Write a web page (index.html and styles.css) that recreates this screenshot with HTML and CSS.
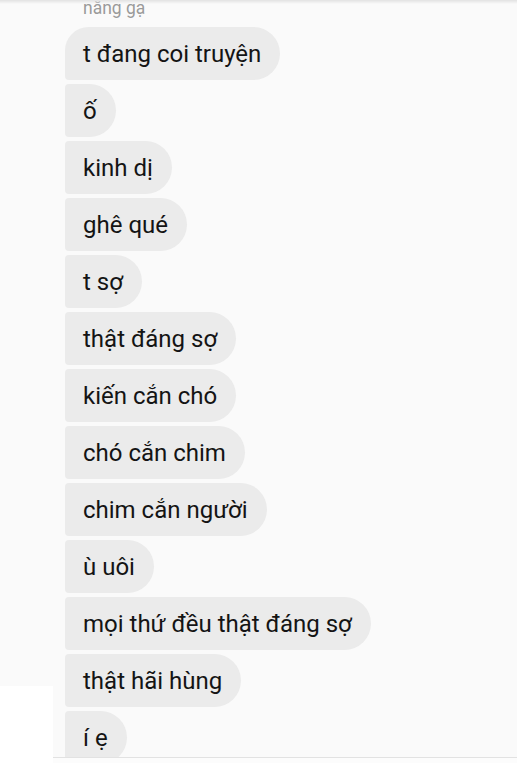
FILE: index.html
```html
<!DOCTYPE html>
<html lang="vi">
<head>
    <meta charset="UTF-8">
    <meta name="viewport" content="width=device-width, initial-scale=1.0">
    <title>Tin nhắn</title>
    <link rel="stylesheet" href="styles.css">
</head>
<body>
    <div class="screen">
        <div class="top-shadow"></div>
        <div class="thread">
            <div class="sender">nắng gạ</div>
            <div class="bubbles">
                <div class="bubble first">t đang coi truyện</div>
                <div class="bubble">ố</div>
                <div class="bubble">kinh dị</div>
                <div class="bubble">ghê qué</div>
                <div class="bubble">t sợ</div>
                <div class="bubble">thật đáng sợ</div>
                <div class="bubble">kiến cắn chó</div>
                <div class="bubble">chó cắn chim</div>
                <div class="bubble">chim cắn người</div>
                <div class="bubble">ù uôi</div>
                <div class="bubble">mọi thứ đều thật đáng sợ</div>
                <div class="bubble">thật hãi hùng</div>
                <div class="bubble">í ẹ</div>
            </div>
        </div>
        <div class="corner-patch"></div>
        <div class="bottom-bar"></div>
    </div>
</body>
</html>
```

FILE: styles.css
```css
body {
    margin: 0;
    background: #fafafa;
    font-family: Roboto, "Noto Sans", sans-serif;
    overflow: hidden;
}
.screen {
    position: relative;
    width: 517px;
    height: 763px;
    overflow: hidden;
}
.top-shadow {
    position: absolute;
    top: 0;
    left: 0;
    right: 0;
    height: 4px;
    background: linear-gradient(#e2e2e2, rgba(250, 250, 250, 0));
}
.thread {
    padding-left: 65px;
}
.sender {
    margin-top: -2px;
    padding-left: 18px;
    height: 29px;
    font-size: 17.5px;
    line-height: 20px;
    color: #9a9a9a;
}
.bubbles {
    display: flex;
    flex-direction: column;
    align-items: flex-start;
    gap: 4px;
}
.bubble {
    height: 53px;
    box-sizing: border-box;
    padding: 0 19px 0 18px;
    display: flex;
    align-items: center;
    background: #ebebeb;
    color: #141414;
    font-size: 24px;
    border-radius: 4px 27px 27px 4px;
}
.bubble.first {
    border-top-left-radius: 24px;
}
.corner-patch {
    position: absolute;
    left: 0;
    top: 686px;
    width: 53px;
    height: 77px;
    background: #ffffff;
}
.bottom-bar {
    position: absolute;
    left: 53px;
    right: 0;
    bottom: 0;
    height: 5px;
    border-top: 1px solid #e2e2e2;
    background: #fcfcfc;
}
```
